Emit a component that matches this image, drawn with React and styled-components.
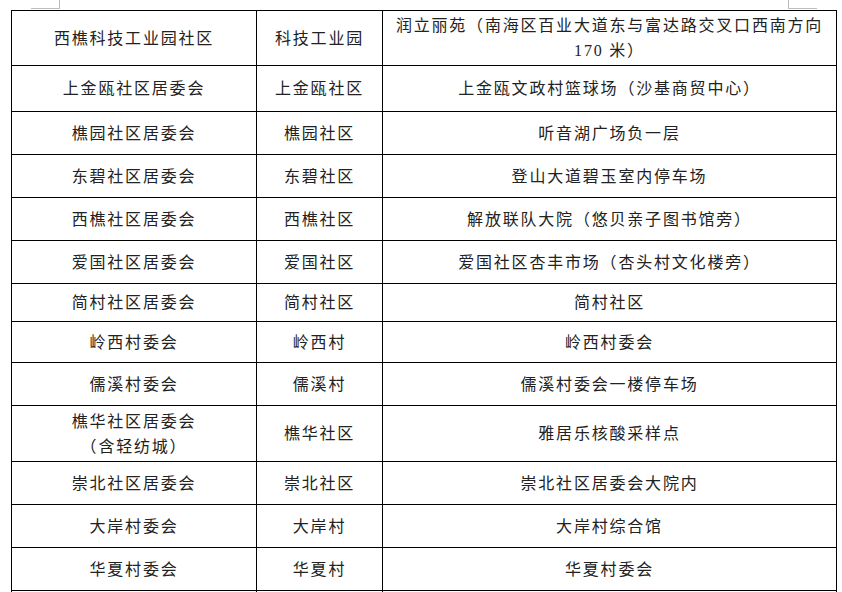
import React from "react";
import styled, { createGlobalStyle } from "styled-components";

const GlobalStyle = createGlobalStyle`
  html, body {
    margin: 0;
    padding: 0;
    background: #ffffff;
    overflow: hidden;
  }
  body {
    font-family: "Liberation Serif", "Noto Sans CJK SC", serif;
  }
`;

const Page = styled.div`
  width: 842px;
  height: 592px;
  overflow: hidden;
  background: #ffffff;
`;

const MarkStrip = styled.div`
  display: flex;
  height: 10px;
`;

const CornerMark = styled.div`
  width: 29px;
  height: 9px;
  box-sizing: border-box;
  border-bottom: 1px solid #bdbdbd;
  border-${(p) => (p.$side === "left" ? "right" : "left")}: 1px solid #bdbdbd;
  margin-left: ${(p) => (p.$side === "left" ? "31px" : "auto")};
  margin-right: ${(p) => (p.$side === "left" ? "0" : "25px")};
`;

const Table = styled.table`
  margin-left: 11px;
  width: 825px;
  table-layout: fixed;
  border-collapse: collapse;
  color: #222222;
  font-size: 16px;
  letter-spacing: 1.8px;
`;

const Row = styled.tr`
  height: ${(p) => p.$h}px;
`;

const Cell = styled.td`
  border: 1px solid #000000;
  padding: 0 2px;
  text-align: center;
  vertical-align: middle;
  line-height: 25px;
  white-space: nowrap;
  overflow: hidden;
`;

const rows = [
  { h: 55, a: "西樵科技工业园社区", b: "科技工业园", c: ["润立丽苑（南海区百业大道东与富达路交叉口西南方向", "170 米）"] },
  { h: 46, a: "上金瓯社区居委会", b: "上金瓯社区", c: "上金瓯文政村篮球场（沙基商贸中心）" },
  { h: 43, a: "樵园社区居委会", b: "樵园社区", c: "听音湖广场负一层" },
  { h: 43, a: "东碧社区居委会", b: "东碧社区", c: "登山大道碧玉室内停车场" },
  { h: 43, a: "西樵社区居委会", b: "西樵社区", c: "解放联队大院（悠贝亲子图书馆旁）" },
  { h: 43, a: "爱国社区居委会", b: "爱国社区", c: "爱国社区杏丰市场（杏头村文化楼旁）" },
  { h: 38, a: "简村社区居委会", b: "简村社区", c: "简村社区" },
  { h: 41, a: "岭西村委会", b: "岭西村", c: "岭西村委会" },
  { h: 43, a: "儒溪村委会", b: "儒溪村", c: "儒溪村委会一楼停车场" },
  { h: 56, a: ["樵华社区居委会", "（含轻纺城）"], b: "樵华社区", c: "雅居乐核酸采样点" },
  { h: 43, a: "崇北社区居委会", b: "崇北社区", c: "崇北社区居委会大院内" },
  { h: 43, a: "大岸村委会", b: "大岸村", c: "大岸村综合馆" },
  { h: 43, a: "华夏村委会", b: "华夏村", c: "华夏村委会" },
  { h: 43, a: "", b: "", c: "" },
];

function Lines({ value }) {
  if (!Array.isArray(value)) return value;
  return value.map((line, i) => (
    <React.Fragment key={i}>
      {i > 0 && <br />}
      {line}
    </React.Fragment>
  ));
}

export default function App() {
  return (
    <Page>
      <GlobalStyle />
      <MarkStrip>
        <CornerMark $side="left" />
        <CornerMark $side="right" />
      </MarkStrip>
      <Table>
        <colgroup>
          <col style={{ width: 245 }} />
          <col style={{ width: 126 }} />
          <col style={{ width: 454 }} />
        </colgroup>
        <tbody>
          {rows.map((r, i) => (
            <Row key={i} $h={r.h}>
              <Cell>
                <Lines value={r.a} />
              </Cell>
              <Cell>
                <Lines value={r.b} />
              </Cell>
              <Cell>
                <Lines value={r.c} />
              </Cell>
            </Row>
          ))}
        </tbody>
      </Table>
    </Page>
  );
}
